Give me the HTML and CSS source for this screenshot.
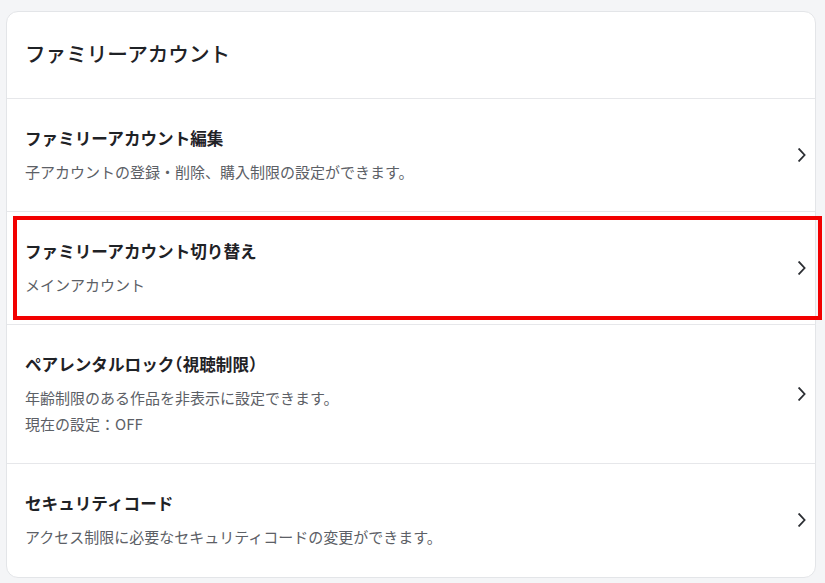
FILE: index.html
```html
<!DOCTYPE html>
<html lang="ja">
<head>
<meta charset="utf-8">
<title>ファミリーアカウント</title>
<link rel="stylesheet" href="styles.css">
</head>
<body>
<section class="card">
  <h1 class="card-title">ファミリーアカウント</h1>
  <a class="row" href="#">
    <div class="row-text">
      <div class="row-title">ファミリーアカウント編集</div>
      <div class="row-sub">子アカウントの登録・削除、購入制限の設定ができます。</div>
    </div>
    <svg class="chev" width="8" height="14" viewBox="0 0 8 14"><path d="M1.2 1.2 L6.6 7 L1.2 12.8" fill="none" stroke="#2b2e33" stroke-width="1.8" stroke-linecap="square"/></svg>
  </a>
  <a class="row highlighted" href="#">
    <div class="row-text">
      <div class="row-title">ファミリーアカウント切り替え</div>
      <div class="row-sub">メインアカウント</div>
    </div>
    <svg class="chev" width="8" height="14" viewBox="0 0 8 14"><path d="M1.2 1.2 L6.6 7 L1.2 12.8" fill="none" stroke="#2b2e33" stroke-width="1.8" stroke-linecap="square"/></svg>
    <span class="mark"></span>
  </a>
  <a class="row" href="#">
    <div class="row-text">
      <div class="row-title">ペアレンタルロック<span class="paren">（</span>視聴制限<span class="paren">）</span></div>
      <div class="row-sub">年齢制限のある作品を非表示に設定できます。</div>
      <div class="row-sub">現在の設定：OFF</div>
    </div>
    <svg class="chev" width="8" height="14" viewBox="0 0 8 14"><path d="M1.2 1.2 L6.6 7 L1.2 12.8" fill="none" stroke="#2b2e33" stroke-width="1.8" stroke-linecap="square"/></svg>
  </a>
  <a class="row last" href="#">
    <div class="row-text">
      <div class="row-title">セキュリティコード</div>
      <div class="row-sub">アクセス制限に必要なセキュリティコードの変更ができます。</div>
    </div>
    <svg class="chev" width="8" height="14" viewBox="0 0 8 14"><path d="M1.2 1.2 L6.6 7 L1.2 12.8" fill="none" stroke="#2b2e33" stroke-width="1.8" stroke-linecap="square"/></svg>
  </a>
</section>
</body>
</html>
```
FILE: styles.css
```css
html, body {
  margin: 0;
  padding: 0;
  background: #f4f5f7;
}
body {
  padding: 11px 9px 5px 6px;
  font-family: "Noto Sans CJK JP", "Noto Sans", sans-serif;
  color: #1f2226;
}
.card {
  background: #ffffff;
  border: 1px solid #e3e5e8;
  border-radius: 12px;
  display: flex;
  flex-direction: column;
}
.card-title {
  margin: 0;
  padding: 26px 18px 30px;
  font-size: 20.6px;
  line-height: 30px;
  font-weight: 500;
  color: #1f2226;
}
.row {
  position: relative;
  display: flex;
  align-items: center;
  border-top: 1px solid #e6e7ea;
  padding: 26px 9px 26px 18px;
  text-decoration: none;
  color: inherit;
}
.row.last {
  padding-bottom: 27px;
}
.row-text {
  flex: 1;
  display: flex;
  flex-direction: column;
}
.row-title {
  font-size: 16.6px;
  line-height: 26px;
  font-weight: 700;
  color: #1f2226;
  margin-bottom: 8px;
}
.row-sub {
  font-size: 15px;
  line-height: 26px;
  color: #5c6066;
}
.paren {
  font-feature-settings: "halt";
}
.chev {
  flex: none;
  display: block;
}
.mark {
  position: absolute;
  top: 4px;
  bottom: 4px;
  left: 6px;
  right: -7px;
  border: 4px solid #f20000;
  pointer-events: none;
}
```
